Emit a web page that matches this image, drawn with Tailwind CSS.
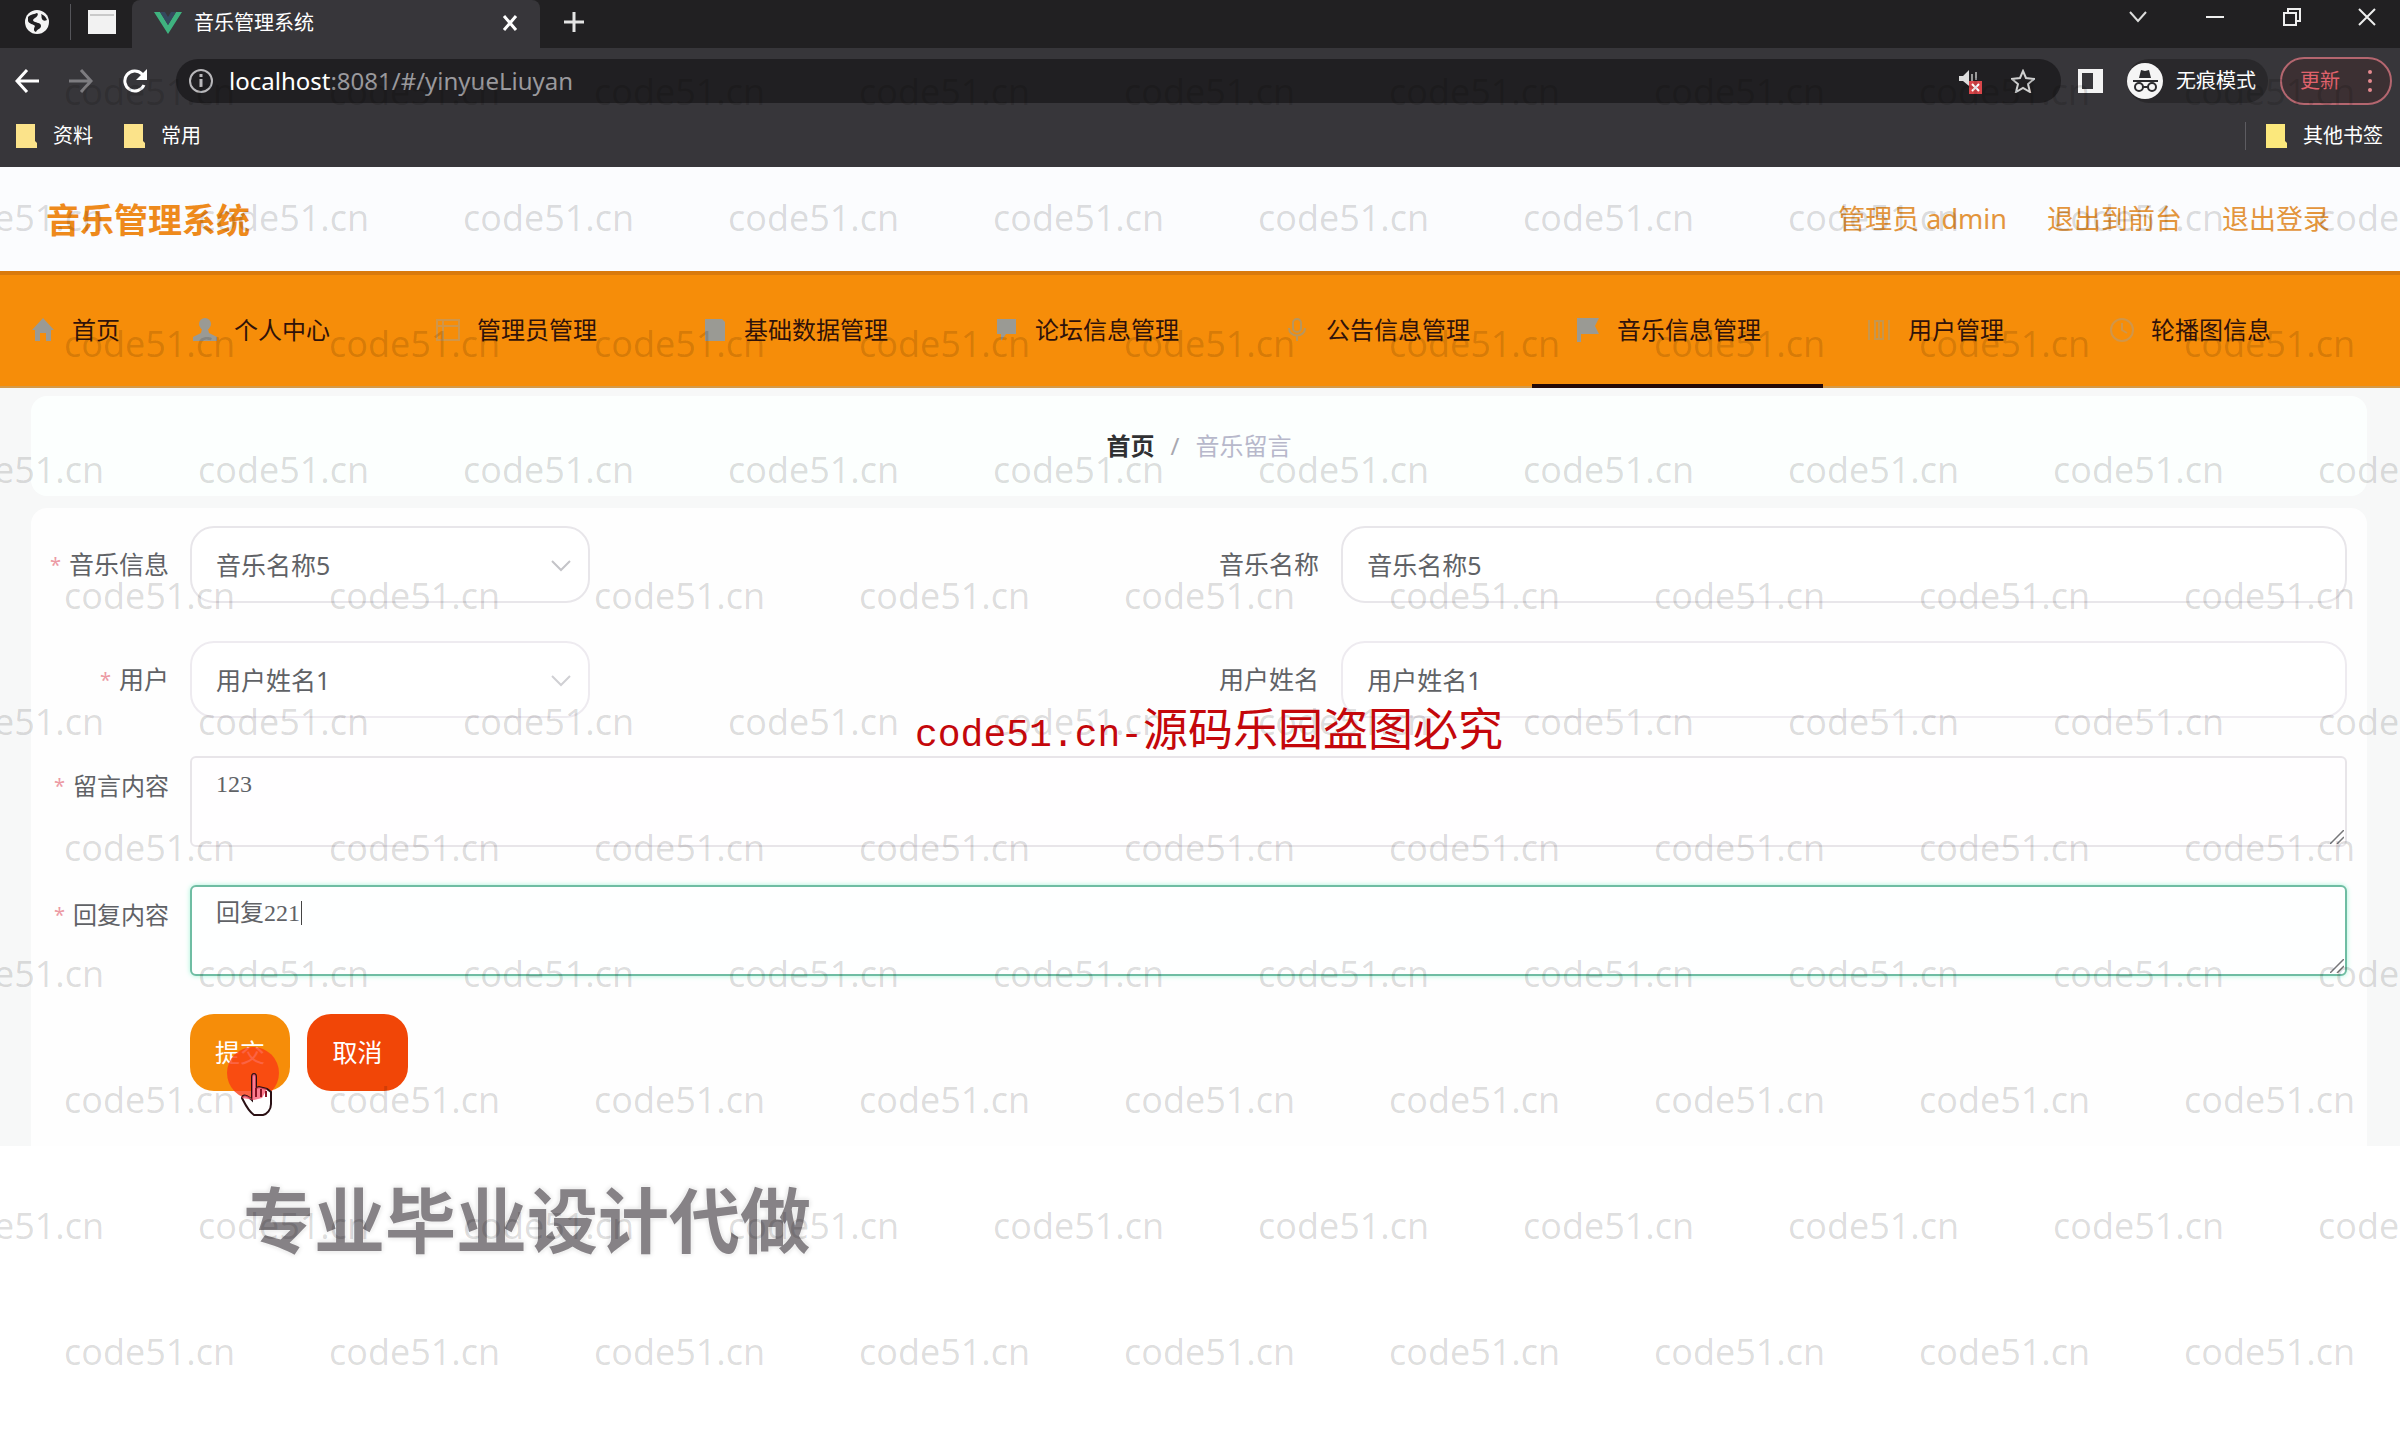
<!DOCTYPE html>
<html lang="zh-CN">
<head>
<meta charset="utf-8">
<title>音乐管理系统</title>
<script src="https://cdn.jsdelivr.net/npm/@tailwindcss/browser@4"></script>
</head>
<body class="bg-white font-['Noto_Sans','Noto_Sans_CJK_SC',sans-serif] text-[#606266]">
<div class="relative min-h-screen overflow-hidden">

  <!-- Browser window -->
  <div class="bg-[#37363a] text-[20px] leading-7 text-white">
    <div class="flex h-12 items-start bg-[#212022]">
      <div class="flex h-11 w-[132px] shrink-0 items-center">
        <div class="flex w-[70px] justify-center pl-1">
          <svg class="size-6" viewBox="0 0 24 24"><circle cx="12" cy="12" r="12" fill="#f4f4f4"/><path d="M3 7c3-3 7-3 9-4 2 1 0 4-2 5s-3 3 0 4 6 1 6 4-4 3-5 6c-3-1-2-4-1-6-2-2-6-2-7-5zM16 4c1 2 0 3 1 5s3 2 5 1c-1-3-3-5-6-6z" fill="#212022"/></svg>
        </div>
        <div class="h-9 w-px bg-[#55555a]"></div>
        <div class="flex flex-1 justify-center">
          <svg class="h-6 w-7" viewBox="0 0 28 24"><rect width="28" height="24" fill="#f2f2f2"/><path d="M2 5h24" stroke="#c9c9c9" stroke-width="2"/></svg>
        </div>
      </div>
      <div class="flex h-12 w-[408px] shrink-0 items-center rounded-t-lg bg-[#37363a] pr-[20px] pb-[2px] pl-[22px]">
        <svg class="h-[22px] w-7" viewBox="0 0 28 22"><path d="M0 0h6l8 13 8-13h6L14 22z" fill="#3fb27f"/><path d="M6 0h5l3 5 3-5h5l-8 13z" fill="#34495e"/></svg>
        <span class="ml-3 flex-1">音乐管理系统</span>
        <button aria-label="关闭标签页" class="flex size-5 items-center justify-center"><svg class="size-4" viewBox="0 0 16 16" stroke="#fff" stroke-width="3"><path d="M2 1l12 14M14 1L2 15"/></svg></button>
      </div>
      <button aria-label="新标签页" class="flex h-11 w-[68px] items-center justify-center"><svg class="size-5" viewBox="0 0 20 20" stroke="#e4e4e4" stroke-width="3"><path d="M10 0v20M0 10h20"/></svg></button>
      <div class="ml-auto flex h-[34px] items-center">
        <button aria-label="搜索标签页" class="flex w-[77px] justify-center"><svg class="h-3 w-[18px]" viewBox="0 0 18 12" fill="none" stroke="#ddd" stroke-width="2"><path d="M1 1l8 9 8-9"/></svg></button>
        <button aria-label="最小化" class="flex w-[77px] justify-center"><svg class="h-4 w-[18px]" viewBox="0 0 18 16" stroke="#eee" stroke-width="2"><path d="M0 8h18"/></svg></button>
        <button aria-label="还原" class="flex w-[77px] justify-center"><svg class="size-[18px]" viewBox="0 0 18 18" fill="none" stroke="#eee" stroke-width="2"><path d="M1 5h12v12H1zM5 5V1h12v12h-4"/></svg></button>
        <button aria-label="关闭" class="flex w-[70px] justify-center pl-1"><svg class="size-[18px]" viewBox="0 0 18 18" stroke="#eee" stroke-width="2"><path d="M1 1l16 16M17 1L1 17"/></svg></button>
      </div>
    </div>

    <div class="flex h-[66px] items-center pr-[8px]">
      <button aria-label="后退" class="flex w-[54px] justify-center"><svg class="size-6" viewBox="0 0 24 24" fill="none" stroke="#fff" stroke-width="3"><path d="M24 12H2M12 1L2 12l10 11"/></svg></button>
      <button aria-label="前进" class="flex w-[54px] justify-center"><svg class="size-6" viewBox="0 0 24 24" fill="none" stroke="#7d7c80" stroke-width="3"><path d="M0 12h22M12 1l10 11-10 11"/></svg></button>
      <button aria-label="重新加载" class="flex w-[54px] justify-center"><svg class="size-6" viewBox="0 0 24 24" fill="none" stroke="#fff" stroke-width="3"><path d="M21 16a10 10 0 1 1-2-11l3 4"/><path d="M24 0v11H13z" fill="#fff" stroke="none"/></svg></button>
      <div class="ml-[14px] flex h-11 flex-1 items-center rounded-full bg-[#201f22] pr-[26px] pl-[13px]">
        <svg class="size-6" viewBox="0 0 24 24" fill="none" stroke="#b9b8bb" stroke-width="2"><circle cx="12" cy="12" r="11"/><path d="M12 10v8M12 5v3" stroke-width="3"/></svg>
        <div class="ml-4 flex-1 text-[24px] leading-8 text-[#9a999d]"><span class="text-white">localhost</span>:8081/#/yinyueLiuyan</div>
        <svg class="mr-[28px] h-7 w-6" viewBox="0 0 24 28"><path d="M0 9h4l6-6v16l-6-5H0z" fill="#ddd"/><path d="M13 7v8M17 5v8" stroke="#999" stroke-width="2"/><rect x="10" y="14" width="13" height="13" fill="#d8464a"/><path d="M13 17l7 7M20 17l-7 7" stroke="#fff" stroke-width="2"/></svg>
        <svg class="size-6" viewBox="0 0 24 24" fill="none" stroke="#d0d0d0" stroke-width="2"><path d="M12 2l3 7 8 1-6 5 2 8-7-4-7 4 2-8-6-5 8-1z"/></svg>
      </div>
      <svg class="mr-[24px] ml-[17px] h-6 w-[25px]" viewBox="0 0 25 24"><rect width="25" height="24" fill="#f3f3f3"/><rect x="4" y="4" width="11" height="16" fill="#37363a"/></svg>
      <div class="flex h-11 items-center rounded-full bg-[#29282b] pr-3">
        <svg class="size-[37px]" viewBox="0 0 37 37"><circle cx="18" cy="18" r="18" fill="#f5f5f5"/><path d="M12 15l2-8 4 1 4-1 2 8z" fill="#2b2b2e"/><path d="M6 18h25" stroke="#2b2b2e" stroke-width="2"/><g fill="none" stroke="#2b2b2e" stroke-width="2"><circle cx="12" cy="24" r="4"/><circle cx="25" cy="24" r="4"/><path d="M16 24h5"/></g></svg>
        <span class="ml-[12px]">无痕模式</span>
      </div>
      <button class="ml-3 flex h-[48px] w-[112px] items-center rounded-full border-2 border-[#b4666f] bg-[#3c3033] pl-[18px] text-[#e0626c]">更新
        <svg class="ml-6 h-6 w-5" viewBox="0 0 20 24" fill="#e58a90"><circle cx="6" cy="3" r="2"/><circle cx="6" cy="12" r="2"/><circle cx="6" cy="21" r="2"/></svg>
      </button>
    </div>

    <div class="flex h-[53px] items-center pr-[17px] pb-[9px] pl-4">
      <svg class="h-6 w-[21px]" viewBox="0 0 21 24"><path d="M0 0h19v17l2 2v5H0z" fill="#fbe38a"/></svg><span class="ml-4">资料</span>
      <svg class="ml-[31px] h-6 w-[21px]" viewBox="0 0 21 24"><path d="M0 0h19v17l2 2v5H0z" fill="#fbe38a"/></svg><span class="ml-4">常用</span>
      <div class="ml-auto h-7 w-px bg-[#5d5c61]"></div>
      <svg class="ml-5 h-6 w-[21px]" viewBox="0 0 21 24"><path d="M0 0h19v17l2 2v5H0z" fill="#fbe87c"/></svg><span class="ml-4">其他书签</span>
    </div>
  </div>

  <!-- Site header -->
  <header class="flex h-[104px] items-center justify-between bg-[#fbfcfe] pr-[70px] pl-[46px] text-[#ee8a1c]">
    <h1 class="pt-[2px] text-[34px] leading-10 font-bold">音乐管理系统</h1>
    <div class="flex gap-[40px] text-[27px] leading-9 text-[#e3953c]">
      <span>管理员 admin</span><a href="#">退出到前台</a><a href="#">退出登录</a>
    </div>
  </header>

  <nav class="flex h-[117px] items-stretch border-t-4 border-b-2 border-t-[#d97a0c] border-b-[#d59a48] bg-[#f68d09] text-[24px] leading-8 text-[#30120a]">
    <a href="#" class="flex items-center gap-[17px] pr-[29px] pb-[2px] pl-[31px]"><svg class="size-6" viewBox="0 0 24 24" fill="#9a9a94"><path d="M12 0l11 12h-3v11h-5v-8H9v8H4V12H1z"/></svg>首页</a>
    <a href="#" class="flex items-center gap-[17px] pr-[62px] pb-[2px] pl-[44px]"><svg class="size-6" viewBox="0 0 24 24" fill="#9a9a94"><circle cx="12" cy="6" r="6"/><path d="M9 11h6l1 4 8 4v4H0v-4l8-4z"/></svg>个人中心</a>
    <a href="#" class="flex items-center gap-[17px] pr-[62px] pb-[2px] pl-[44px]"><svg class="size-6" viewBox="0 0 24 24" fill="none" stroke="#d0964a" stroke-width="2"><rect x="1" y="2" width="22" height="20"/><path d="M7 2v20M1 8h22"/></svg>管理员管理</a>
    <a href="#" class="flex items-center gap-[17px] pr-[62px] pb-[2px] pl-[44px]"><svg class="size-6" viewBox="0 0 24 24" fill="#9a9a94"><path d="M2 1h17l3 3v19H2z"/></svg>基础数据管理</a>
    <a href="#" class="flex items-center gap-[17px] pr-[62px] pb-[2px] pl-[44px]"><svg class="size-6" viewBox="0 0 24 24" fill="#9a9a94"><path d="M3 1h19v15H12l-5 7v-7H3z"/></svg>论坛信息管理</a>
    <a href="#" class="flex items-center gap-[17px] pr-[62px] pb-[2px] pl-[44px]"><svg class="size-6" viewBox="0 0 24 24" fill="none" stroke="#b8965e" stroke-width="2"><rect x="8" y="1" width="8" height="13" rx="4"/><path d="M4 10c0 10 16 10 16 0M12 18v5"/></svg>公告信息管理</a>
    <a href="#" aria-current="page" class="relative flex items-center gap-[17px] pr-[62px] pb-[2px] pl-[44px]"><svg class="size-6" viewBox="0 0 24 24" fill="#9a9a94"><path d="M1 0h22l-4 8 4 8H5v8H1z"/></svg>音乐信息管理<span class="absolute inset-x-0 -bottom-[2px] h-1 bg-[#250a08]"></span></a>
    <a href="#" class="flex items-center gap-[17px] pr-[62px] pb-[2px] pl-[44px]"><svg class="size-6" viewBox="0 0 24 24" fill="none" stroke="#c8964c" stroke-width="2"><path d="M2 2v20M22 2v20M8 3h8v18H8zM12 3v18"/></svg>用户管理</a>
    <a href="#" class="flex items-center gap-[17px] pr-[62px] pb-[2px] pl-[44px]"><svg class="size-6" viewBox="0 0 24 24" fill="none" stroke="#d0964a" stroke-width="2"><circle cx="12" cy="12" r="11"/><path d="M12 5v7l5 3"/></svg>轮播图信息</a>
  </nav>

  <main class="bg-[#f7f8f8] pt-2 pr-[33px] pl-[31px]">
    <div class="flex h-[100px] items-center justify-center gap-4 rounded-2xl bg-[#fcfffe] text-[24px] leading-8">
      <a href="#" class="font-bold text-[#303133]">首页</a><span class="text-[#a8a8b0]">/</span><span class="text-[#b7b8cb]">音乐留言</span>
    </div>

    <form class="mt-3 flex h-[638px] flex-col gap-[38px] rounded-t-2xl bg-[#fefefe] pt-[18px] pr-5 text-[25px] leading-8">
      <div class="flex">
        <label for="music" class="w-[159px] shrink-0 pr-[21px] text-right leading-[77px]"><span class="mr-2 align-top text-[20px] text-[#ec9aa4]">*</span>音乐信息</label>
        <div class="relative w-[400px]">
          <select id="music" class="h-[77px] w-full appearance-none rounded-3xl border-2 border-[#e8e6ea] bg-white px-6"><option>音乐名称5</option></select>
          <svg class="absolute top-[34px] right-[19px] h-3 w-5" viewBox="0 0 20 12" fill="none" stroke="#c4c4c8" stroke-width="2"><path d="M1 1l9 9 9-9"/></svg>
        </div>
        <label for="musicName" class="ml-auto shrink-0 pr-[22px] leading-[77px]">音乐名称</label>
        <input id="musicName" value="音乐名称5" class="h-[77px] w-[calc(43%+10px)] rounded-3xl border-2 border-[#e8e6ea] bg-white px-6 pb-[2px]">
      </div>
      <div class="flex">
        <label for="user" class="w-[159px] shrink-0 pr-[21px] text-right leading-[77px]"><span class="mr-2 align-top text-[20px] text-[#ec9aa4]">*</span>用户</label>
        <div class="relative w-[400px]">
          <select id="user" class="h-[77px] w-full appearance-none rounded-3xl border-2 border-[#eeebf0] bg-white px-6"><option>用户姓名1</option></select>
          <svg class="absolute top-[34px] right-[19px] h-3 w-5" viewBox="0 0 20 12" fill="none" stroke="#d0d0d4" stroke-width="2"><path d="M1 1l9 9 9-9"/></svg>
        </div>
        <label for="userName" class="ml-auto shrink-0 pr-[22px] leading-[77px]">用户姓名</label>
        <input id="userName" value="用户姓名1" class="h-[77px] w-[calc(43%+10px)] rounded-3xl border-2 border-[#eeebf0] bg-white px-6 pb-[2px]">
      </div>
      <div class="flex">
        <label for="message" class="w-[159px] shrink-0 pr-[21px] text-right text-[24px] leading-[60px]"><span class="mr-2 align-top text-[20px] text-[#ec9aa4]">*</span>留言内容</label>
        <div class="relative flex flex-1">
          <textarea id="message" class="h-[91px] flex-1 resize-none rounded-md border-2 border-[#e8e5e9] bg-[#fffeff] px-6 py-2 font-['Liberation_Serif','Noto_Sans_CJK_SC',serif] text-[24px] leading-9">123</textarea>
          <svg class="absolute right-[3px] bottom-[3px] size-[14px]" viewBox="0 0 14 14" stroke="#77777a" stroke-width="1.5"><path d="M0 14L14 0M7 14l7-7"/></svg>
        </div>
      </div>
      <div class="flex">
        <label for="reply" class="w-[159px] shrink-0 pr-[21px] text-right text-[24px] leading-[60px]"><span class="mr-2 align-top text-[20px] text-[#ec9aa4]">*</span>回复内容</label>
        <div class="relative flex flex-1">
          <textarea id="reply" class="h-[91px] flex-1 resize-none rounded-md border-2 border-[#6fbda3] bg-[#feffff] px-6 py-2 font-['Liberation_Serif','Noto_Sans_CJK_SC',serif] text-[24px] leading-9 shadow-[0_0_5px_#a8f5da]">回复221</textarea>
          <span class="absolute top-4 left-[111px] h-6 w-px bg-[#444]"></span>
          <svg class="absolute right-[3px] bottom-[3px] size-[14px]" viewBox="0 0 14 14" stroke="#77777a" stroke-width="1.5"><path d="M0 14L14 0M7 14l7-7"/></svg>
        </div>
      </div>
      <div class="flex gap-[17px] pl-[159px] text-white">
        <div class="relative">
          <button type="submit" class="h-[77px] w-[100px] rounded-3xl bg-[#f68d09] pb-[2px]">提交</button>
          <!-- Click highlight and pointer -->
          <svg class="pointer-events-none absolute top-[31px] left-[36px] h-[72px] w-[54px]" viewBox="0 0 54 72"><circle cx="27" cy="28" r="26" fill="#fa3c14" fill-opacity=".8"/><path d="M26 32c0-4 4-4 4 0v11l3-1 4 1 4 1 4 3v12c0 6-4 10-8 11h-9c-6-4-9-11-12-17 1-4 5-3 10 2z" fill="#fff" stroke="#2a1014" stroke-width="2"/><path d="M16 53c1-4 5-3 10 1V32c0-4 4-4 4 0v11l3-1 4 1 4 1-5 9-8 2z" fill="#f8506a" fill-opacity=".75"/><path d="M30 43v9M35 44v8M40 46v6" stroke="#8a1224" stroke-width="2"/></svg>
        </div>
        <button type="button" class="h-[77px] w-[101px] rounded-3xl bg-[#f14607] pb-[2px]">取消</button>
      </div>
    </form>
  </main>

  <div class="absolute top-[1168px] left-[243px] text-[71px] leading-[104px] font-bold whitespace-nowrap text-[#868286] [text-shadow:0_0_3px_#fff,0_0_5px_#ccc]">专业毕业设计代做</div>

  <!-- Repeating site watermark -->
  <div aria-hidden="true" class="pointer-events-none absolute inset-0 overflow-hidden font-['Open_Sans','Noto_Sans',sans-serif] text-[36px] leading-[126px] whitespace-nowrap text-black/14" id="marks"></div>

  <div class="pointer-events-none absolute top-[705px] left-[915px] font-['Liberation_Mono','Noto_Sans_CJK_SC',monospace] text-[38px] leading-[60px] whitespace-nowrap text-[#c4070b]">code51.cn-<span class="text-[45px]">源码乐园盗图必究</span></div>
</div>
<script>
  const marks = document.getElementById('marks');
  for (let r = 0; r < 11; r++) {
    const row = document.createElement('div');
    row.className = r % 2 ? 'flex h-[126px] -ml-[67px]' : 'flex h-[126px] ml-[64px]';
    for (let c = 0; c < 11; c++) {
      const s = document.createElement('span');
      s.className = 'w-[265px] shrink-0';
      s.textContent = 'code51.cn';
      row.append(s);
    }
    marks.append(row);
  }
  marks.firstChild.classList.add('mt-[29px]');
</script>
</body>
</html>
